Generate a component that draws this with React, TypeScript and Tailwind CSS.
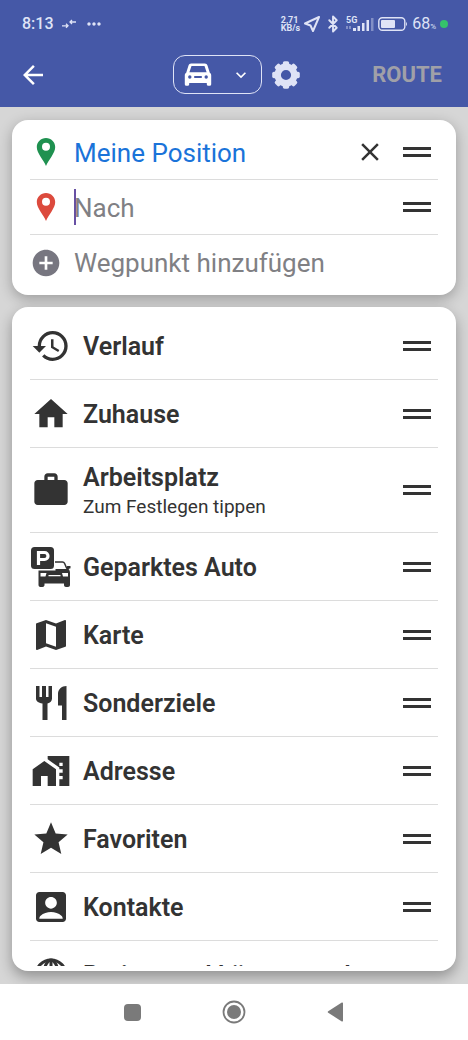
import type { ReactNode } from "react";
import { Bluetooth } from "lucide-react";
import {
  MdAccountBox,
  MdAddCircle,
  MdArrowBack,
  MdClose,
  MdHistory,
  MdHome,
  MdHomeWork,
  MdKeyboardArrowDown,
  MdMap,
  MdMoreHoriz,
  MdStar,
  MdWork,
} from "react-icons/md";

interface Place {
  title: string;
  hint?: string;
  icon: ReactNode;
}

const places: Place[] = [
  { title: "Verlauf", icon: <MdHistory className="size-10" /> },
  { title: "Zuhause", icon: <MdHome className="size-10" /> },
  { title: "Arbeitsplatz", hint: "Zum Festlegen tippen", icon: <MdWork className="size-10" /> },
  { title: "Geparktes Auto", icon: <ParkedCarIcon /> },
  { title: "Karte", icon: <MdMap className="size-10" /> },
  { title: "Sonderziele", icon: <CutleryIcon /> },
  { title: "Adresse", icon: <MdHomeWork className="size-10" /> },
  { title: "Favoriten", icon: <MdStar className="size-10" /> },
  { title: "Kontakte", icon: <MdAccountBox className="size-10" /> },
  { title: "Breiten und Längengrad", icon: <GlobeIcon /> },
];

const gearTeeth = [0, 45, 90, 135, 180, 225, 270, 315];

function CarIcon() {
  return (
    <svg viewBox="0 0 28 24" className="h-6 w-7" fill="currentColor">
      <path
        fillRule="evenodd"
        d="M7.200.5h13.600c1.400 0 2.300.8 2.700 2l2.300 7.200c.9.6 1.400 1.500 1.400 2.500v9c0 .9-.6 1.500-1.500 1.500h-1.400c-.9 0-1.500-.6-1.500-1.500V20H5.200v1.200c0 .9-.6 1.500-1.500 1.500H2.300c-.9 0-1.500-.6-1.500-1.500v-9c0-1 .5-1.900 1.400-2.500L4.500 2.500c.4-1.200 1.300-2 2.700-2zM7.500 3L5.400 9.200h17.200L20.500 3zM5.800 12.300a1.700 1.700 0 100 3.400 1.700 1.700 0 000-3.400zM22.200 12.300a1.700 1.700 0 100 3.400 1.700 1.700 0 000-3.400zM10.200 13v2h7.600v-2z"
      />
    </svg>
  );
}

function GearIcon() {
  return (
    <svg viewBox="0 0 28 28" className="size-7" fill="currentColor">
      {gearTeeth.map((angle) => (
        <rect key={angle} x="10.800" y="0.200" width="6.400" height="7" rx="1.800" transform={`rotate(${angle} 14 14)`} />
      ))}
      <circle cx="14" cy="14" r="8.300" fill="none" stroke="currentColor" strokeWidth="6.400" />
    </svg>
  );
}

function PinIcon({ className }: { className: string }) {
  return (
    <svg viewBox="0 0 20 30" className={`h-[30px] w-5 ${className}`} fill="currentColor">
      <path
        fillRule="evenodd"
        d="M10 1C4.900 1 .8 5 .8 10.100c0 3.300 1.700 6.300 3.600 9.300 2.200 3.500 4.200 6.100 5.600 9.600 1.400-3.500 3.400-6.100 5.600-9.600 1.900-3 3.600-6 3.600-9.300C19.200 5 15.100 1 10 1zm0 4.700a4 4 0 110 8 4 4 0 010-8z"
      />
    </svg>
  );
}

function ParkedCarIcon() {
  return (
    <svg viewBox="0 0 40 40" className="size-10" fill="currentColor">
      <rect width="23" height="22" rx="3.500" />
      <path fill="none" stroke="#fff" strokeWidth="3.200" d="M7.500 18V5.500h6a3.500 3.500 0 010 7h-6" />
      <path fill="none" stroke="currentColor" strokeWidth="1.500" d="M24 15h7.500c1 0 1.600.4 2 1.300l2.200 5" />
      <path d="M24.500 22H35l1.200-3h3.300v2.300l-2 .7c1.100 1 1.500 2.200 1.500 4V38c0 1.200-.8 2-2 2h-2c-1.200 0-2-.8-2-2v-1.500H13.500V38c0 1.200-.8 2-2 2h-2c-1.200 0-2-.8-2-2V23.500h17z" />
      <path fill="#fff" d="M9.500 26h6l-1 3.500h-5zM37 26h-6l1 3.500h5zM17.500 28h12v1.300h-12z" />
    </svg>
  );
}

function CutleryIcon() {
  return (
    <svg viewBox="0 0 40 40" className="size-10" fill="currentColor">
      <path d="M5 3h3.500v11H11V3h4v11h2.500V3H21v12.500c0 2.500-1.800 4.500-4.500 5V37h-5V20.500C7 20 5 18 5 15.500zM35.500 3v34H31V22.500h-4V11c0-4.500 3.500-8 8.500-8z" />
    </svg>
  );
}

function GlobeIcon() {
  return (
    <svg viewBox="0 0 40 40" className="size-10" fill="none" stroke="currentColor" strokeWidth="3">
      <circle cx="20" cy="20" r="15" />
      <ellipse cx="20" cy="20" rx="7" ry="15" />
      <path d="M20 5v30M6 14.500h28M6 25.500h28" />
    </svg>
  );
}

function StatusBar() {
  return (
    <div className="flex h-12 items-center justify-between pr-5 pl-[22px] text-[#dfe3f6]">
      <div className="flex items-center gap-2">
        <span className="text-base font-medium">8:13</span>
        <svg viewBox="0 0 14 10" className="h-[10px] w-[14px]" fill="none" stroke="currentColor" strokeWidth="1.300">
          <path d="M0 6.800h6M4 4.800L6 6.800 4 8.800M14 3H8M10 1L8 3l2 2" />
        </svg>
        <MdMoreHoriz className="size-5" />
      </div>
      <div className="flex items-center gap-1">
        <div className="flex flex-col text-[9px] leading-[8px] font-bold">
          <span>2,71</span>
          <span>KB/s</span>
        </div>
        <svg viewBox="0 0 16 16" className="size-4" fill="none" stroke="currentColor" strokeWidth="2" strokeLinejoin="round">
          <path d="M15 1L1 7.500l5.500 2L9 15z" />
        </svg>
        <Bluetooth className="h-5 w-[18px]" strokeWidth={2.5} />
        <svg viewBox="0 0 28 16" className="h-4 w-7" fill="currentColor">
          <text x="0" y="7" fontSize="9" fontWeight="700" fontFamily="Roboto, sans-serif">5G</text>
          <path d="M7 12h3v3H7zM11.500 10h2.500v5h-2.500zM16 7h2.500v8H16zM20.500 4H23v11h-2.500z" />
          <path opacity=".4" d="M25 2h2.500v13H25zM0 10h2v3H0zM3 10h2v3H3z" />
        </svg>
        <svg viewBox="0 0 30 14" className="h-[14px] w-[30px]" fill="currentColor">
          <rect x=".8" y=".8" width="26" height="12.400" rx="3.500" fill="none" stroke="currentColor" strokeWidth="1.400" />
          <rect x="3" y="3" width="14" height="8" rx="1" />
          <path d="M28 5c1.300.5 1.300 3.500 0 4z" />
        </svg>
        <span className="text-base">
          68<span className="text-[8px]">%</span>
        </span>
        <span className="size-2 rounded-full bg-[#35c26b]" />
      </div>
    </div>
  );
}

function DragHandle({ label }: { label: string }) {
  return (
    <button type="button" aria-label={`${label} verschieben`} className="flex w-7 shrink-0 flex-col gap-1">
      <span className="h-[3px] bg-[#333]" />
      <span className="h-[3px] bg-[#333]" />
    </button>
  );
}

function PlaceRow({ place }: { place: Place }) {
  return (
    <li
      className={`flex shrink-0 items-center border-b border-[#dcdcdc] pr-[7px] ${place.hint ? "h-[85px]" : "h-[68px]"}`}
    >
      <button type="button" className="flex min-w-0 grow items-center gap-3 pl-px text-left">
        <span className="flex size-10 shrink-0 items-center justify-center">{place.icon}</span>
        <span className="flex min-w-0 flex-col pt-[2px]">
          <span className="text-[25px] leading-8 font-semibold whitespace-nowrap">{place.title}</span>
          {place.hint && <span className="text-[19px] leading-[26px]">{place.hint}</span>}
        </span>
      </button>
      <DragHandle label={place.title} />
    </li>
  );
}

export default function App() {
  return (
    <div className="flex h-screen flex-col overflow-hidden bg-[#d6d6d6] font-[Roboto,sans-serif] text-[#333]">
      <header className="shrink-0 bg-[#4558a7]">
        <StatusBar />
        <div className="grid h-[59px] grid-cols-[1fr_auto_1fr] items-start pr-[18px] pl-[22px]">
          <button type="button" aria-label="Zurück" className="-ml-1 mt-3 w-fit text-white">
            <MdArrowBack className="size-[30px]" />
          </button>
          <div className="mt-[7px] flex items-center gap-[10px]">
            <button
              type="button"
              aria-label="Fahrzeug wählen"
              className="flex h-[39px] w-[89px] items-center justify-between rounded-xl border border-[#dfe3f6] px-[10px] text-white"
            >
              <CarIcon />
              <MdKeyboardArrowDown className="size-5" />
            </button>
            <button type="button" aria-label="Einstellungen" className="text-[#dfe3f6]">
              <GearIcon />
            </button>
          </div>
          <button type="button" className="mt-[13px] mr-2 justify-self-end text-[22px] leading-7 font-bold text-[#a0a0a8]">
            ROUTE
          </button>
        </div>
      </header>

      <main className="flex min-h-0 grow flex-col gap-3 px-3 py-[13px]">
        <section className="shrink-0 rounded-2xl bg-white px-[18px] py-[5px] text-[26px] shadow-[0_4px_14px_rgba(0,0,0,0.28)]">
          <div className="flex h-[55px] items-center border-b border-[#dcdcdc] pr-[7px]">
            <span className="flex w-8 shrink-0 justify-center">
              <PinIcon className="text-[#1f9150]" />
            </span>
            <input
              aria-label="Von"
              defaultValue="Meine Position"
              className="ml-3 w-0 min-w-0 grow pt-[3px] text-[#1a73d9] outline-none"
            />
            <button type="button" aria-label="Start löschen" className="mr-[18px] shrink-0">
              <MdClose className="size-[30px]" />
            </button>
            <DragHandle label="Start" />
          </div>
          <div className="flex h-[55px] items-center border-b border-[#dcdcdc] pr-[7px]">
            <span className="flex w-8 shrink-0 justify-center">
              <PinIcon className="text-[#dc4a3d]" />
            </span>
            <span className="ml-3 h-9 w-[2px] shrink-0 bg-[#6750a4]" />
            <input
              aria-label="Nach"
              placeholder="Nach"
              className="-ml-[2px] w-0 min-w-0 grow pt-[3px] outline-none placeholder:text-[#808084]"
            />
            <DragHandle label="Ziel" />
          </div>
          <button type="button" className="flex h-[55px] w-full items-center text-left text-[#808084]">
            <span className="flex w-8 shrink-0 justify-center">
              <MdAddCircle className="size-8 text-[#777680]" />
            </span>
            <span className="ml-3 pt-[2px]">Wegpunkt hinzufügen</span>
          </button>
        </section>

        <section className="flex min-h-0 grow flex-col rounded-2xl bg-white px-[18px] py-[5px] shadow-[0_6px_14px_rgba(0,0,0,0.32)]">
          <ul className="flex min-h-0 grow flex-col overflow-hidden">
            {places.map((place) => (
              <PlaceRow key={place.title} place={place} />
            ))}
          </ul>
        </section>
      </main>

      <nav className="flex h-14 shrink-0 items-center justify-center gap-[78px] bg-white text-[#7a7a7a]">
        <button type="button" aria-label="Übersicht" className="flex size-6 items-center justify-center">
          <span className="size-[17px] rounded-sm bg-current" />
        </button>
        <button type="button" aria-label="Startbildschirm">
          <svg viewBox="0 0 24 24" className="size-6" fill="currentColor">
            <circle cx="12" cy="12" r="10.500" fill="none" stroke="currentColor" strokeWidth="1.800" />
            <circle cx="12" cy="12" r="7" />
          </svg>
        </button>
        <button type="button" aria-label="Zurück zur letzten App">
          <svg viewBox="0 0 24 24" className="size-6" fill="currentColor">
            <path d="M19 3.200v17.600c0 .8-.6 1-1.200.6L4.200 12.800c-.6-.4-.6-1.200 0-1.600l13.600-8.600c.6-.4 1.200-.2 1.200.6z" />
          </svg>
        </button>
      </nav>
    </div>
  );
}
